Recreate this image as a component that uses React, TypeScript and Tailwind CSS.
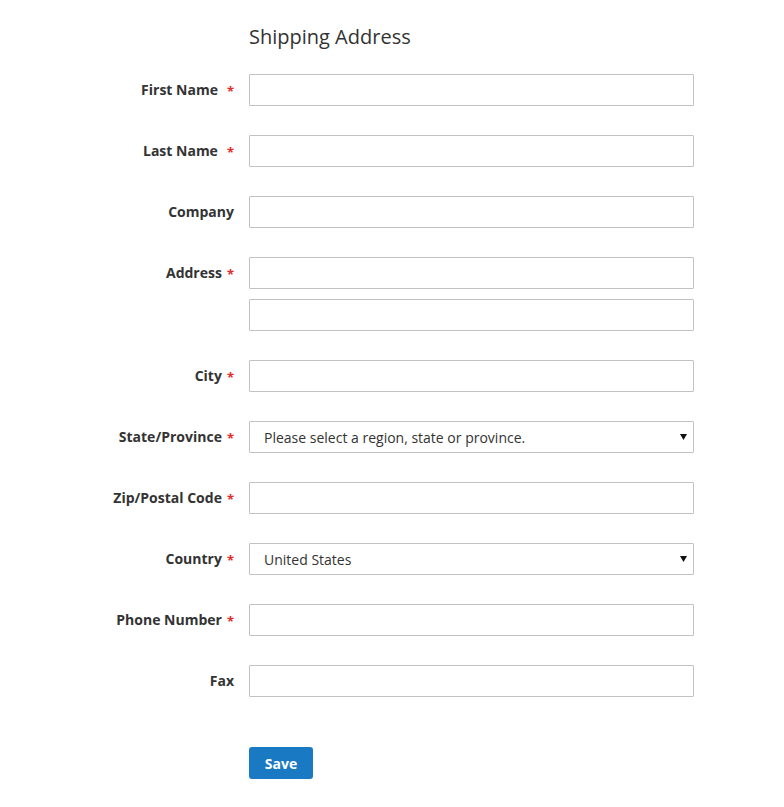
// Shipping Address form

type Field = { label: string; required?: boolean; wide?: boolean; kind?: "input" | "select"; value?: string; lines?: number };

const fields: Field[] = [
  { label: "First Name", required: true, wide: true },
  { label: "Last Name", required: true, wide: true },
  { label: "Company" },
  { label: "Address", required: true, lines: 2 },
  { label: "City", required: true },
  { label: "State/Province", required: true, kind: "select", value: "Please select a region, state or province." },
  { label: "Zip/Postal Code", required: true },
  { label: "Country", required: true, kind: "select", value: "United States" },
  { label: "Phone Number", required: true },
  { label: "Fax" },
];

function Control({ f }: { f: Field }) {
  if (f.kind === "select") {
    return (
      <div className="relative w-[445px] h-[32px]">
        <select
          className="w-full h-full appearance-none border border-[#c2c2c2] rounded-[1px] bg-white pl-[14px] pr-8 text-[14px] text-[#333] outline-none"
          defaultValue={f.value}
        >
          <option>{f.value}</option>
        </select>
        <svg className="absolute right-[7px] top-[13px] pointer-events-none" width="7" height="6" viewBox="0 0 7 6">
          <path d="M0 0 L7 0 L3.5 6 Z" fill="#111" />
        </svg>
      </div>
    );
  }
  return <input className="w-[445px] h-[32px] border border-[#c2c2c2] rounded-[1px] bg-white px-[9px] text-[14px] outline-none" />;
}

export default function App() {
  return (
    <div className="min-h-[807px] bg-white text-[#333]" style={{ fontFamily: "'Open Sans', 'Noto Sans', sans-serif" }}>
      <div className="pt-[22px]">
        <h1 className="pl-[249px] text-[20px] font-normal leading-[30px] text-[#333]">Shipping Address</h1>

        <div className="mt-[22px] flex flex-col gap-[29px]">
          {fields.map(f => (
            <div key={f.label} className="flex items-start">
              <label className="w-[234px] shrink-0 h-[32px] flex items-center justify-end text-[14px] leading-[20px] font-bold text-[#333]">
                <span className="leading-[20px]">
                  {f.label}
                  {f.required && (
                    <span className={`${f.wide ? "ml-[9px]" : "ml-[5px]"} relative top-[1px] text-[13px] leading-none font-bold text-[#e02b27]`}>*</span>
                  )}
                </span>
              </label>
              <div className="ml-[15px] flex flex-col gap-[10px]">
                <Control f={f} />
                {f.lines === 2 && <Control f={{ label: "Address 2" }} />}
              </div>
            </div>
          ))}
        </div>

        <div className="mt-[50px] pl-[249px]">
          <button className="h-[32px] w-[64px] rounded-[3px] bg-[#1979c3] text-[14px] font-bold text-white">Save</button>
        </div>
      </div>
    </div>
  );
}
